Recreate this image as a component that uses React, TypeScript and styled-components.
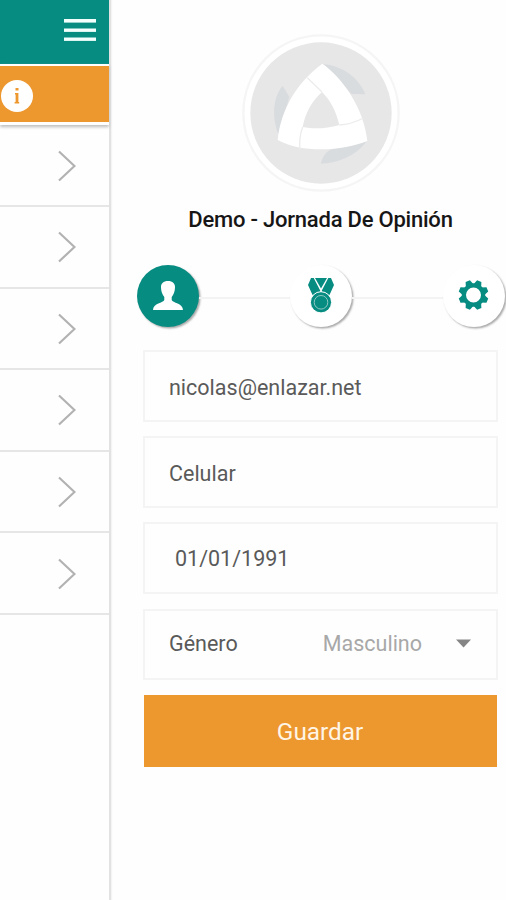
import React from "react";
import styled, { createGlobalStyle } from "styled-components";

const GlobalStyle = createGlobalStyle`
  * { box-sizing: border-box; }
  body { margin: 0; background: #fefefe; font-family: Roboto, sans-serif; }
`;

const teal = "#078c82";
const orange = "#ed972f";

const Screen = styled.div`
  display: flex;
  width: 506px;
  height: 900px;
  overflow: hidden;
  background: #fefefe;
`;

const Sidebar = styled.aside`
  width: 111px;
  flex: none;
  border-right: 2px solid #e2e2e2;
  box-shadow: 1px 0 1px #f4f4f4;
`;

const TopBar = styled.header`
  height: 64px;
  display: flex;
  justify-content: flex-end;
  padding: 19px 13px 0 0;
  background: ${teal};
`;

const NoticeBar = styled.div`
  height: 61px;
  display: flex;
  align-items: center;
  background: ${orange};
  border-top: 2px solid #fff;
  border-bottom: 3px solid #fff;
  box-shadow: 0 2px 3px #bdbdbd;
`;

const InfoBadge = styled.span`
  display: flex;
  align-items: center;
  justify-content: center;
  width: 32px;
  height: 32px;
  border-radius: 50%;
  margin-top: 3px;
  margin-left: 0.5px;
  background: #fff;
`;

const MenuRow = styled.div<{ $first?: boolean }>`
  height: ${(p) => (p.$first ? 82 : 81.6)}px;
  display: flex;
  align-items: center;
  justify-content: flex-end;
  padding: 1px 33px 0 0;
  border-bottom: 2px solid #e6e6e6;
`;

const Panel = styled.main`
  flex: 1;
  display: flex;
  flex-direction: column;
  padding: 33px 8px 0 32px;
`;

const Logo = styled.svg`
  display: block;
  align-self: center;
  width: 160px;
  height: 160px;
  flex: none;
`;

const Title = styled.h1`
  margin: 12px 0 0;
  font-size: 22px;
  line-height: 30px;
  font-weight: 500;
  letter-spacing: -0.22px;
  text-align: center;
  white-space: nowrap;
  color: #161616;
`;

const Stepper = styled.nav`
  display: flex;
  align-items: center;
  height: 62px;
  margin: 30px -7px 0 -6px;
`;

const StepLine = styled.span`
  flex: 1;
  height: 2px;
  margin-top: 4px;
  background: #f3f3f3;
`;

const Step = styled.button<{ $active?: boolean }>`
  width: 62px;
  height: 62px;
  flex: none;
  display: flex;
  align-items: center;
  justify-content: center;
  padding: 0 1px 2px 0;
  border: 0;
  border-radius: 50%;
  color: ${(p) => (p.$active ? "#fff" : teal)};
  background: ${(p) => (p.$active ? teal : "#fff")};
  box-shadow: 1.5px 1.5px 2px #aaa;
`;

const Form = styled.form`
  display: flex;
  flex-direction: column;
  gap: 14.4px;
  margin-top: 23px;
`;

const Field = styled.div<{ $inset?: number; $top?: number }>`
  height: 71.8px;
  display: flex;
  align-items: center;
  padding: ${(p) => p.$top ?? 2}px 25px 0 ${(p) => 24 + (p.$inset ?? 0)}px;
  border: 2px solid #f4f4f4;
  font-size: 21.5px;
  color: #5a5a5a;
`;

const SelectField = styled(Field)`
  padding-top: 0;
  padding-bottom: 2px;
`;

const SelectValue = styled.span`
  margin-left: auto;
  margin-right: 34px;
  color: #a8a8a8;
`;

const SaveButton = styled.button`
  height: 72px;
  margin: 0 1px;
  padding: 2px 1px 0 0;
  border: 0;
  font: 400 24.3px Roboto, sans-serif;
  color: #fff5e6;
  background: ${orange};
`;

const Chevron = () => (
  <svg width="18" height="32" viewBox="0 0 18 32" fill="none" stroke="#b2b2b2" strokeWidth="2.2">
    <path d="M1 1.5 16.5 16 1 30.5" />
  </svg>
);

export default function App() {
  return (
    <>
      <GlobalStyle />
      <Screen>
        <Sidebar>
          <TopBar>
            <svg width="32" height="23" viewBox="0 0 32 23" fill="#f2fffd">
              <rect y="0" width="32" height="3.6" />
              <rect y="9.5" width="32" height="3.4" />
              <rect y="18.5" width="32" height="3.4" />
            </svg>
          </TopBar>
          <NoticeBar>
            <InfoBadge>
              <svg width="6" height="16" viewBox="0 0 6 16" fill={orange}>
                <path d="M1.5 0h3v2.500h-3zM1 5h3.400v9h.8v1.500h-4.600v-1.500h1V6.500h-.6z" />
              </svg>
            </InfoBadge>
          </NoticeBar>
          {[0, 1, 2, 3, 4, 5].map((i) => (
            <MenuRow key={i} $first={i === 0}>
              <Chevron />
            </MenuRow>
          ))}
        </Sidebar>
        <Panel>
          <Logo viewBox="33 24 480 480">
            <circle cx="273" cy="264" r="233" fill="#fff" stroke="#f5f5f5" strokeWidth="7" />
            <circle cx="273" cy="264" r="212" fill="#e7e7e8" />
            <g fill="#d9dcde">
              <path d="M280 117C330 122 382 150 406 208L365 207Z" />
              <path d="M158 182C127 218 125 280 146 330L178 216Z" />
              <path d="M272 416C280 392 288 377 310 372L410 349C377 393 325 415 272 416Z" />
            </g>
            <path
              fill="#fff"
              fillRule="evenodd"
              d="M277 116C337 158 402 249 412 348C347 374 224 389 143 345C153 251 202 171 277 116ZM276 201C246 228 226 263 218 306C250 313 291 311 328 300C319 262 303 227 276 201Z"
            />
            <g fill="none" stroke="#ececed" strokeWidth="4">
              <path d="M232 158 276 201" />
              <path d="M218 306Q206 339 210 374" />
              <path d="M328 300Q361 299 401 279" />
            </g>
          </Logo>
          <Title>Demo - Jornada De Opinión</Title>
          <Stepper>
            <Step $active aria-label="Perfil">
              <svg width="30" height="29" viewBox="0 0 30 29" fill="currentColor">
                <path d="M15 0C10.500 0 7.800 2.500 8 6.500 8.100 10.500 9.300 13.500 11.300 16V19C10.500 22 0 22 0 29H30C30 22 19.500 22 18.700 19V16C20.700 13.500 21.900 10.500 22 6.500 22.200 2.500 19.500 0 15 0Z" />
              </svg>
            </Step>
            <StepLine />
            <Step aria-label="Premios">
              <svg width="28" height="35" viewBox="-14 0 28 35">
                <path fill="currentColor" d="M-10 0H-7.300L-.8 12.500V15L-8.500 17-13 7ZM10 0H7.300L.8 12.500V15L8.500 17 13 7ZM-6 0H6L0 10.500Z" />
                <circle cy="24.300" r="10.600" fill="currentColor" stroke="#fff" strokeWidth="1" />
                <circle cy="24.300" r="6.800" fill="none" stroke="#8ec8c2" strokeWidth="1" />
              </svg>
            </Step>
            <StepLine />
            <Step aria-label="Ajustes">
              <svg width="32" height="30" viewBox="-15.500 -15 32 30">
                <g fill="currentColor" transform="rotate(22.500)">
                  {[0, 45, 90, 135, 180, 225, 270, 315].map((a) => (
                    <path key={a} transform={`rotate(${a})`} d="M-4.500-9-2.300-15H2.300L4.500-9Z" />
                  ))}
                </g>
                <circle r="9.600" fill="none" stroke="currentColor" strokeWidth="4.200" />
              </svg>
            </Step>
          </Stepper>
          <Form>
            <Field $inset={0} $top={4}><span>nicolas@enlazar.net</span></Field>
            <Field $inset={0}><span>Celular</span></Field>
            <Field $inset={6} $top={0}><span>01/01/1991</span></Field>
            <SelectField $inset={0}>
              <span>Género</span>
              <SelectValue>Masculino</SelectValue>
              <svg width="15" height="9" viewBox="0 0 15 9" fill="#858585">
                <path d="M0 .5H15L7.500 8.500Z" />
              </svg>
            </SelectField>
            <SaveButton type="button">Guardar</SaveButton>
          </Form>
        </Panel>
      </Screen>
    </>
  );
}
